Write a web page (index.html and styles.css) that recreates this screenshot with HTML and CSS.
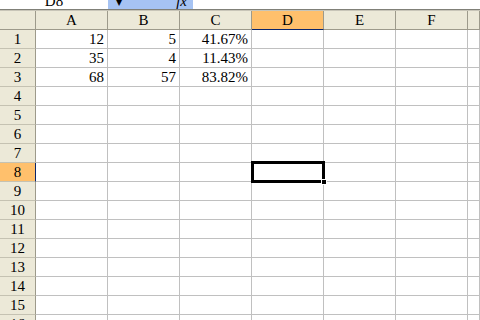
FILE: index.html
```html
<!DOCTYPE html>
<html lang="en">
<head>
    <meta charset="UTF-8" />
    <title>Book1</title>
    <link rel="stylesheet" href="styles.css">
</head>
<body>
    <div class="formula-bar">
        <div class="name-box">D8</div>
        <div class="fx-box">
            <span class="drop">&#9660;</span>
            <span class="fx">fx</span>
        </div>
    </div>

    <div class="sheet">
        <div class="corner"></div>
        <div class="col-head">A</div>
        <div class="col-head">B</div>
        <div class="col-head">C</div>
        <div class="col-head active">D</div>
        <div class="col-head">E</div>
        <div class="col-head">F</div>
        <div class="col-head"></div>

        <div class="row-head">1</div><div class="cell">12</div><div class="cell">5</div><div class="cell">41.67%</div><div class="cell"></div><div class="cell"></div><div class="cell"></div><div class="cell"></div>
        <div class="row-head">2</div><div class="cell">35</div><div class="cell">4</div><div class="cell">11.43%</div><div class="cell"></div><div class="cell"></div><div class="cell"></div><div class="cell"></div>
        <div class="row-head">3</div><div class="cell">68</div><div class="cell">57</div><div class="cell">83.82%</div><div class="cell"></div><div class="cell"></div><div class="cell"></div><div class="cell"></div>
        <div class="row-head">4</div><div class="cell"></div><div class="cell"></div><div class="cell"></div><div class="cell"></div><div class="cell"></div><div class="cell"></div><div class="cell"></div>
        <div class="row-head">5</div><div class="cell"></div><div class="cell"></div><div class="cell"></div><div class="cell"></div><div class="cell"></div><div class="cell"></div><div class="cell"></div>
        <div class="row-head">6</div><div class="cell"></div><div class="cell"></div><div class="cell"></div><div class="cell"></div><div class="cell"></div><div class="cell"></div><div class="cell"></div>
        <div class="row-head">7</div><div class="cell"></div><div class="cell"></div><div class="cell"></div><div class="cell"></div><div class="cell"></div><div class="cell"></div><div class="cell"></div>
        <div class="row-head active">8</div><div class="cell"></div><div class="cell"></div><div class="cell"></div><div class="cell selected"><div class="cursor"><span class="handle"></span></div></div><div class="cell"></div><div class="cell"></div><div class="cell"></div>
        <div class="row-head">9</div><div class="cell"></div><div class="cell"></div><div class="cell"></div><div class="cell"></div><div class="cell"></div><div class="cell"></div><div class="cell"></div>
        <div class="row-head">10</div><div class="cell"></div><div class="cell"></div><div class="cell"></div><div class="cell"></div><div class="cell"></div><div class="cell"></div><div class="cell"></div>
        <div class="row-head">11</div><div class="cell"></div><div class="cell"></div><div class="cell"></div><div class="cell"></div><div class="cell"></div><div class="cell"></div><div class="cell"></div>
        <div class="row-head">12</div><div class="cell"></div><div class="cell"></div><div class="cell"></div><div class="cell"></div><div class="cell"></div><div class="cell"></div><div class="cell"></div>
        <div class="row-head">13</div><div class="cell"></div><div class="cell"></div><div class="cell"></div><div class="cell"></div><div class="cell"></div><div class="cell"></div><div class="cell"></div>
        <div class="row-head">14</div><div class="cell"></div><div class="cell"></div><div class="cell"></div><div class="cell"></div><div class="cell"></div><div class="cell"></div><div class="cell"></div>
        <div class="row-head">15</div><div class="cell"></div><div class="cell"></div><div class="cell"></div><div class="cell"></div><div class="cell"></div><div class="cell"></div><div class="cell"></div>
        <div class="row-head">16</div><div class="cell"></div><div class="cell"></div><div class="cell"></div><div class="cell"></div><div class="cell"></div><div class="cell"></div><div class="cell"></div>
    </div>
</body>
</html>
```

FILE: styles.css
```css
* {
    margin: 0;
    padding: 0;
    box-sizing: border-box;
}
body {
    font-family: 'Liberation Serif', 'DejaVu Serif', serif;
    font-size: 15px;
    color: #000;
    background: white;
    width: 480px;
    height: 320px;
    overflow: hidden;
}
.formula-bar {
    display: flex;
    height: 9px;
    overflow: hidden;
    background: white;
}
.name-box {
    width: 108px;
    line-height: 9px;
    text-align: center;
    margin-top: -3px;
}
.fx-box {
    width: 85px;
    background: #a6c3f3;
    display: flex;
    justify-content: space-between;
    padding: 0 6px 0 8px;
    line-height: 9px;
}
.drop {
    font-family: 'DejaVu Sans', sans-serif;
    font-size: 8px;
    margin-top: -2px;
}
.fx {
    font-style: italic;
    margin-top: -3px;
}
.sheet {
    display: grid;
    grid-template-columns: 36px repeat(6, 72px) 12px;
    grid-auto-rows: 19px;
    width: 480px;
    overflow: hidden;
    border-top: 1px solid #808078;
    box-shadow: inset 0 1px 0 #c8c5b8;
    padding-top: 1px;
}
.corner,
.col-head,
.row-head {
    background: #ece9d8;
    border-right: 1px solid #9d9a8b;
    border-bottom: 1px solid #9d9a8b;
    text-align: center;
    line-height: 18px;
}
.row-head {
    border-bottom-color: #c5c2b2;
}
.col-head.active,
.row-head.active {
    background: #ffc06c;
}
.col-head.active {
    border-bottom-color: #0a246a;
}
.row-head.active {
    border-right-color: #0a246a;
}
.cell {
    border-right: 1px solid #c0c0c0;
    border-bottom: 1px solid #c0c0c0;
    text-align: right;
    padding-right: 3px;
    line-height: 18px;
    white-space: nowrap;
}
.selected {
    position: relative;
}
.cursor {
    position: absolute;
    left: -1px;
    top: -2px;
    width: 74px;
    height: 22px;
    border: 3px solid #000;
}
.handle {
    position: absolute;
    right: -5px;
    bottom: -5px;
    width: 6px;
    height: 6px;
    background: #000;
    border: 1px solid #fff;
}
```
